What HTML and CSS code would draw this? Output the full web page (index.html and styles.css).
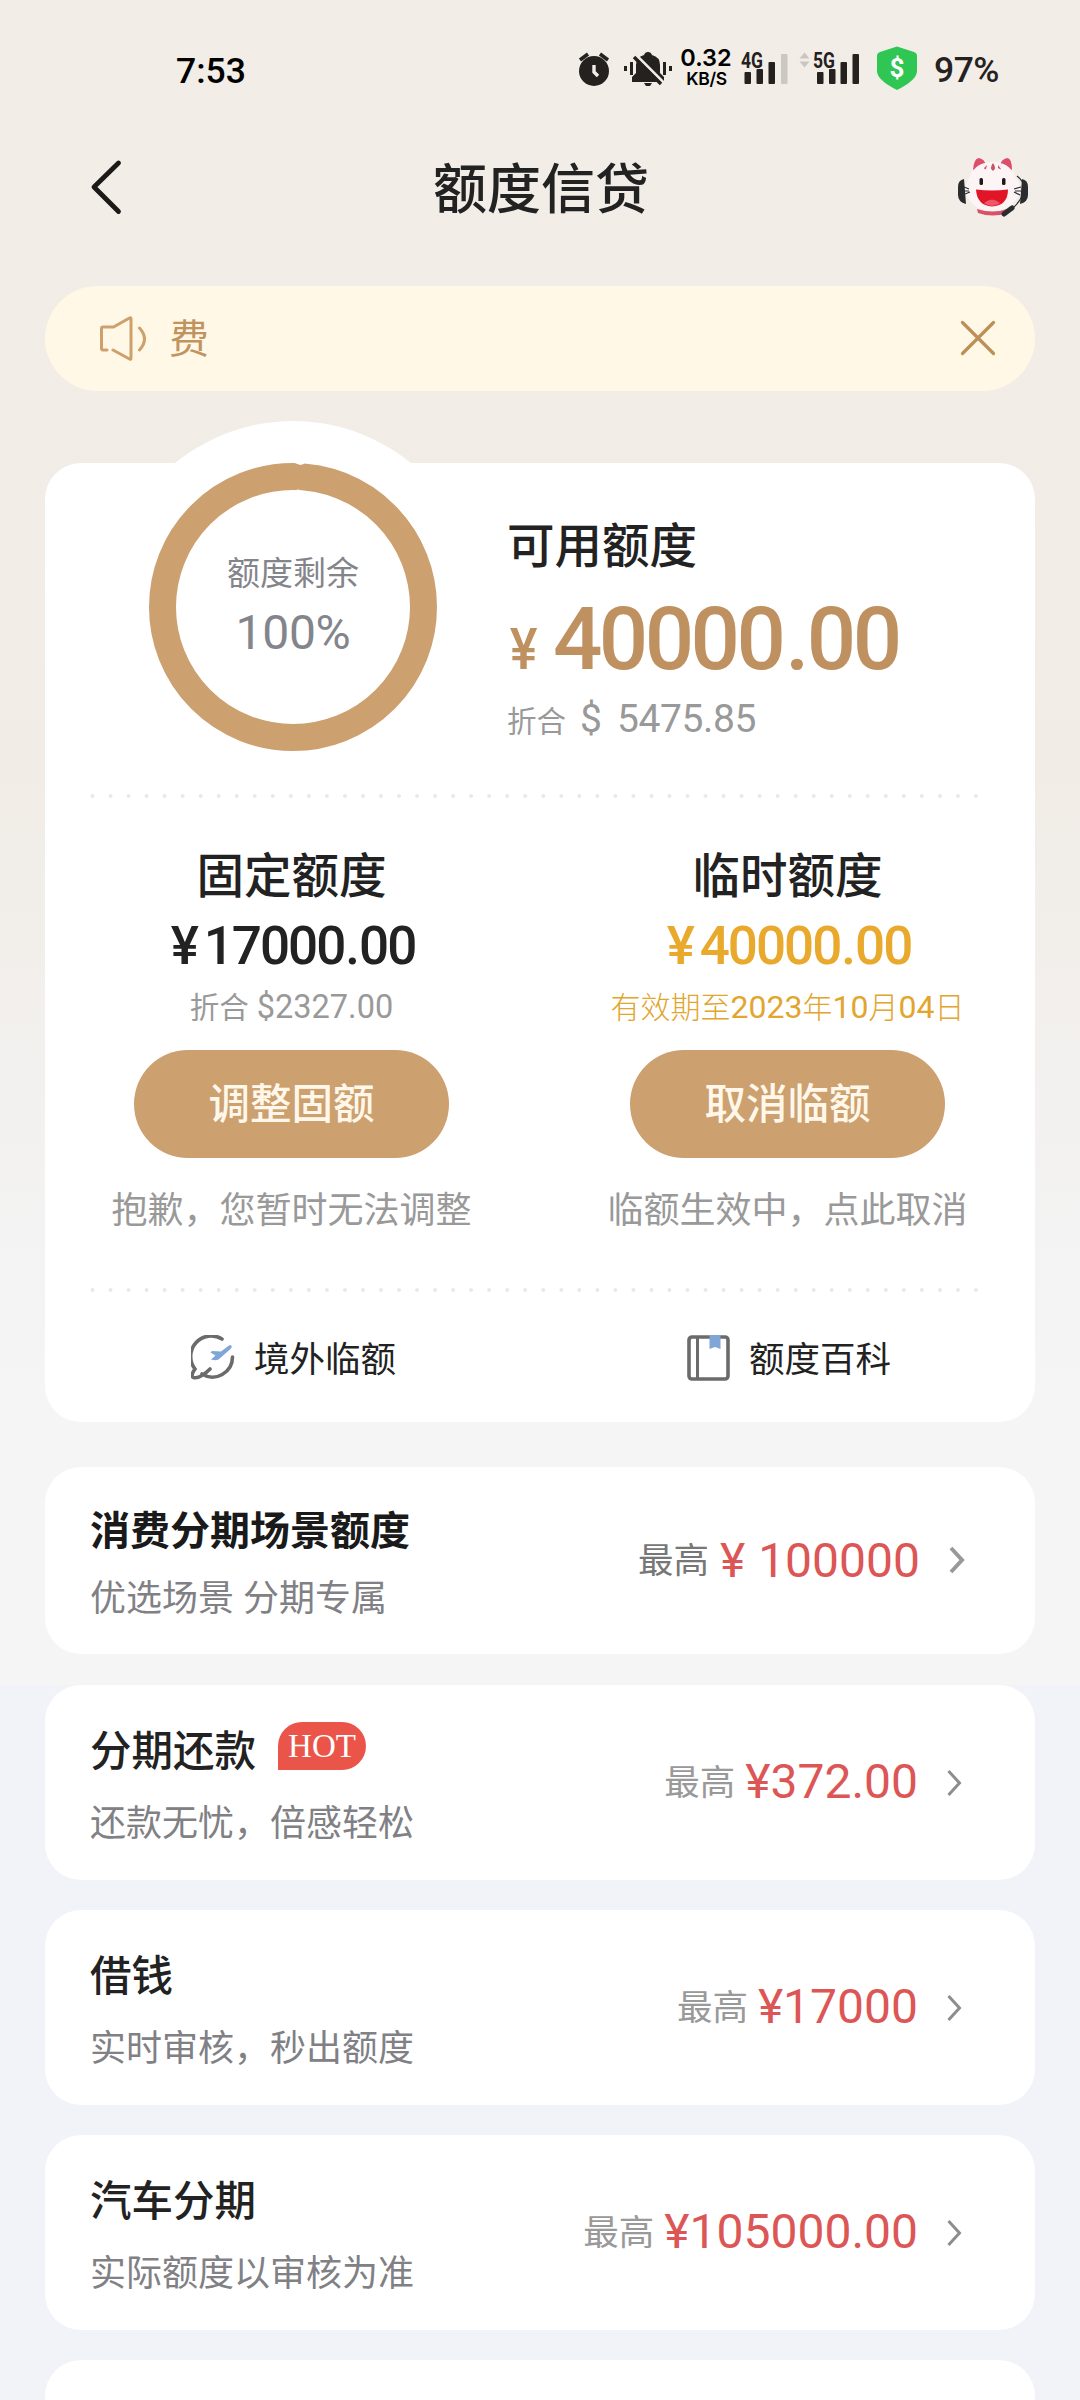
FILE: index.html
```html
<!DOCTYPE html>
<html lang="zh-CN">
<head>
<meta charset="utf-8">
<title>额度信贷</title>
<link rel="stylesheet" href="styles.css">
</head>
<body>
<div class="screen">
  <div class="status">
    <span class="clock">7:53</span>
    <svg class="status-icons" width="98" height="50" viewBox="576 42 98 50">
      <g fill="#25211f">
        <circle cx="594" cy="71" r="15"/>
        <path d="M580 60l8-6M608 60l-8-6" stroke="#25211f" stroke-width="3.6"/>
        <path d="M594 65v7l4 4" fill="none" stroke="#f1ede7" stroke-width="3.4"/>
        <path d="M632 82v-5l4-4v-8q0-8 8-10q1-3 4-3t4 3q8 2 8 10v8l4 4v5z"/>
        <path d="M644 83h8l-2 3h-4z"/>
        <path d="M624 66h3v5h-3zM630 62h3v13h-3zM663 62h3v13h-3zM669 66h3v5h-3z"/>
      </g>
      <path d="M637 56l27 27" stroke="#f1ede7" stroke-width="3"/>
      <path d="M634 57l27 27" stroke="#25211f" stroke-width="3.4"/>
    </svg>
    <div class="speed"><span class="speed-num">0.32</span><span class="speed-unit">KB/S</span></div>
    <svg class="signal" width="180" height="50" viewBox="738 42 180 50">
      <g fill="#25211f" font-family="Roboto, sans-serif" font-size="22" font-weight="700">
        <text x="741" y="67.500" textLength="22" lengthAdjust="spacingAndGlyphs">4G</text>
        <text x="813" y="67.500" textLength="22" lengthAdjust="spacingAndGlyphs">5G</text>
        <rect x="744.500" y="72" width="6.500" height="12" rx="1"/>
        <rect x="756.500" y="69" width="6.500" height="15" rx="1"/>
        <rect x="768.500" y="62" width="6.500" height="22" rx="1"/>
        <rect x="781" y="54" width="6.500" height="30" rx="1" fill="#cbc7c2"/>
        <rect x="817" y="72" width="6.500" height="12" rx="1"/>
        <rect x="829" y="69" width="6.500" height="15" rx="1"/>
        <rect x="840.500" y="62" width="6.500" height="22" rx="1"/>
        <rect x="852.500" y="54" width="6.500" height="30" rx="1"/>
      </g>
      <path d="M799.500 58.500l5-6 5 6zM799.500 61.500l5 6 5-6z" fill="#c9c5c0"/>
      <path d="M897 46.500l17 5.500q3 1 3 4v15q0 9-20 19q-20-10-20-19V56q0-3 3-4z" fill="#2fc653"/>
      <text x="897" y="77" text-anchor="middle" font-family="Roboto, sans-serif" font-size="26" font-weight="700" fill="#fff">$</text>
    </svg>
    <span class="battery">97%</span>
  </div>

  <header class="nav">
    <svg class="back" width="34" height="60" viewBox="0 0 34 60"><path d="M28.500 6L4 30l24.500 24.500" fill="none" stroke="#1c1a19" stroke-width="4.800" stroke-linecap="round" stroke-linejoin="round"/></svg>
    <h1>额度信贷</h1>
    <svg class="mascot" width="70" height="64" viewBox="958 155 70 64">
      <path d="M964 179q-6 1-6 8v8q0 7 8 9zM1022 179q6 1 6 8v8q0 7-8 9z" fill="#2b2c2e"/>
      <path d="M970 180q1-23 8-22q8 0 13 8zM1015 180q-1-23-8-22q-8 0-12 8z" fill="#fbeeee"/>
      <path d="M973 170q1-12 6-12q6 1 7 8zM1012 170q0-12-5-12q-6 1-7 8z" fill="#dd4f68"/>
      <path d="M977 209q16 5 30 0v4q-14 5-29 0z" fill="#d8506a"/>
      <path d="M992.500 162q17 0 22 14q10 12 1 24q-7 11-23 11t-23-11q-9-12 1-24q5-14 22-14z" fill="#fdf5f5"/>
      <path d="M993 163q4 5 0 8q-4-3 0-8zM987 165l-1 4q-1 1-2-1zM998 165l3 4q0 1-3-1z" fill="#c95566"/>
      <rect x="979.500" y="178" width="3.500" height="7" rx="1.500" fill="#20191b"/>
      <rect x="1002" y="178" width="3.500" height="7" rx="1.500" fill="#20191b"/>
      <path d="M976 189.500q16 2 32 0q0 16-16 17q-15-1-16-17z" fill="#e01526"/>
      <path d="M984 203q8-7 16 0q-8 6-16 0z" fill="#f0556b"/>
      <path d="M964 187l5 2M964 191h5M965 194l5-2M1021 187l-7 2M1021 191h-6M1020 195l-6-3M1017 176q7 5 7 13q-1 10-12 20" stroke="#2b2c2e" stroke-width="1.200" fill="none"/>
      <path d="M1004 214l8-6" stroke="#2b2c2e" stroke-width="5" stroke-linecap="round"/>
    </svg>
  </header>

  <section class="notice">
    <svg width="48" height="48" viewBox="99 315 48 48" fill="none" stroke="#cda06c" stroke-width="3" stroke-linecap="round" stroke-linejoin="round">
      <path d="M107 350h-4q-1.500 0-1.500-1.500V328.500q0-1.500 1.500-1.500h10.500l16-9q1.500-1 1.500 1v39q0 2-1.500 1L113 350M139.500 328q10 11 0 22"/>
    </svg>
    <span class="notice-text">费</span>
    <svg class="close" width="38" height="38" viewBox="0 0 38 38"><path d="M3.500 2.500l31 31m0-31l-31 31" stroke="#bd9058" stroke-width="3.300" stroke-linecap="round"/></svg>
  </section>

  <section class="card quota">
    <div class="hero">
      <div class="ring">
        <svg width="288" height="288" viewBox="0 0 288 288">
          <circle cx="144" cy="144" r="130.500" fill="none" stroke="#cca06f" stroke-width="27"/>
          <path d="M146 0l5 2 4-1V0zM145 27.500l4-1 6 1.500z" fill="#fff"/>
        </svg>
        <div class="ring-label"><span class="ring-name">额度剩余</span><span class="ring-num">100%</span></div>
      </div>
      <div class="available">
        <div class="avail-title">可用额度</div>
        <div class="avail-amount"><span class="yen">¥</span>40000<span class="point">.</span>00</div>
        <div class="avail-usd"><span class="conv">折合</span><span class="dollar">$</span>5475.85</div>
      </div>
    </div>
    <svg class="dots" width="890" height="6"><path d="M2.500 3H888" stroke="#e9e9ed" stroke-width="4" stroke-linecap="round" stroke-dasharray="0 18.030"/></svg>
    <div class="split">
      <div class="half">
        <div class="half-title">固定额度</div>
        <div class="half-amount fixed"><span class="sign">¥</span>17000<span class="point">.</span>00</div>
        <div class="half-note"><span>折合</span>$2327.00</div>
        <div class="btn">调整固额</div>
        <div class="half-hint">抱歉，您暂时无法调整</div>
      </div>
      <div class="half">
        <div class="half-title">临时额度</div>
        <div class="half-amount temp"><span class="sign">¥</span>40000<span class="point">.</span>00</div>
        <div class="half-note date">有效期至<b>2023</b>年<b>10</b>月<b>04</b>日</div>
        <div class="btn">取消临额</div>
        <div class="half-hint">临额生效中，点此取消</div>
      </div>
    </div>
    <svg class="dots" width="890" height="6"><path d="M2.500 3H888" stroke="#e9e9ed" stroke-width="4" stroke-linecap="round" stroke-dasharray="0 18.030"/></svg>
    <div class="links">
      <div class="link">
        <svg width="44" height="48" viewBox="0 0 44 48" fill="none" stroke="#6b6b6b" stroke-width="3.600" stroke-linecap="round">
          <path d="M31 4A20.500 20.500 0 0 0 4 34Q-1 41 2.500 42.500Q9 44 19 34M11 39A20 20 0 0 0 41.500 22"/>
          <path d="M39.500 10q2.500 1.500 0 4l-12 10.500q-3 1.500-7.500 0l4.500-4-5-3 1.500-1.500 9 .5 8-6z" fill="#7fa6d6" stroke="none"/>
        </svg>
        <span>境外临额</span>
      </div>
      <div class="link">
        <svg width="44" height="48" viewBox="0 0 44 48" fill="none" stroke="#6b6b6b" stroke-width="3.600">
          <rect x="3" y="2" width="39" height="42" rx="3"/><path d="M11.500 2v42" stroke-width="3"/>
          <path d="M23.500 0h11v14l-5.500-2-5.500 2z" fill="#7fa6d6" stroke="none"/>
        </svg>
        <span>额度百科</span>
      </div>
    </div>
  </section>

  <section class="card item scene">
    <div class="item-text"><div class="item-title">消费分期场景额度</div><div class="item-sub">优选场景 分期专属</div></div>
    <span class="max">最高</span><span class="price"><span class="wide-yen">¥</span>100000</span>
    <svg class="arrow" width="18" height="32" viewBox="0 0 18 32"><path d="M3 3l11 12L3 27" fill="none" stroke="#999" stroke-width="4"/></svg>
  </section>
  <section class="card item">
    <div class="item-text"><div class="item-title">分期还款<span class="hot">HOT</span></div><div class="item-sub">还款无忧，倍感轻松</div></div>
    <span class="max">最高</span><span class="price">¥372.00</span>
    <svg class="arrow" width="18" height="32" viewBox="0 0 18 32"><path d="M2.500 4l11 12-11 12" fill="none" stroke="#8d8d8d" stroke-width="3"/></svg>
  </section>
  <section class="card item">
    <div class="item-text"><div class="item-title">借钱</div><div class="item-sub">实时审核，秒出额度</div></div>
    <span class="max">最高</span><span class="price">¥17000</span>
    <svg class="arrow" width="18" height="32" viewBox="0 0 18 32"><path d="M2.500 4l11 12-11 12" fill="none" stroke="#8d8d8d" stroke-width="3"/></svg>
  </section>
  <section class="card item">
    <div class="item-text"><div class="item-title">汽车分期</div><div class="item-sub">实际额度以审核为准</div></div>
    <span class="max">最高</span><span class="price">¥105000.00</span>
    <svg class="arrow" width="18" height="32" viewBox="0 0 18 32"><path d="M2.500 4l11 12-11 12" fill="none" stroke="#8d8d8d" stroke-width="3"/></svg>
  </section>
  <section class="card item"></section>
</div>
</body>
</html>
```
FILE: styles.css
```css
* { box-sizing: border-box; }
body { margin: 0; }
svg { display: block; flex: none; }
.screen {
  width: 1080px;
  height: 2400px;
  overflow: hidden;
  background: linear-gradient(#f2ede7 0, #f1ece6 780px, #f3f3f3 1240px, #f5f5f5 1400px, #f5f5f5 1685px, #f2f3f9 1685px);
  font-family: Roboto, "Noto Sans CJK SC", sans-serif;
  color: #222;
  white-space: nowrap;
}

.status { display: flex; align-items: center; height: 92px; padding: 42px 0 0 176px; }
.clock { width: 400px; font-size: 35.500px; font-weight: 500; line-height: 50px; color: #000; padding-top: 7px; }
.battery { margin-left: 16px; font-size: 35.500px; line-height: 50px; padding-top: 6px; font-weight: 500; color: #25211f; letter-spacing: -.5px; }
.speed { width: 64px; display: flex; flex-direction: column; align-items: center; color: #000; font-family: Inter, sans-serif; font-weight: 600; }
.speed-num { font-size: 23.500px; line-height: 20px; padding-bottom: 1px; }
.speed-unit { font-size: 17.500px; line-height: 17px; padding: 1px 0 0 1px; letter-spacing: -.4px; }

.nav { display: flex; align-items: center; justify-content: space-between; height: 194px; padding: 0 52px 4px 90px; }
.nav h1 { margin: 7px 22px 0 22px; font-size: 54px; line-height: 60px; font-weight: 500; }

.notice { display: flex; align-items: center; height: 105px; margin: 0 45px 72px; padding: 0 38px 0 54px; border-radius: 53px; background: #fff8e6; }
.notice-text { margin-left: 22px; padding-top: 3px; flex: 1; font-size: 40px; line-height: 60px; color: #c1935f; }

.card { margin: 0 45px 30px; background: #fff; border-radius: 36px; }
.quota { height: 959px; margin-bottom: 45px; padding: 0 45px; }
.hero { display: flex; height: 330px; padding-left: 59px; }
.ring { position: relative; width: 288px; height: 288px; }
.ring::before { content: ""; position: absolute; inset: -42px; border-radius: 50%; background: #fff; }
.ring svg { position: relative; }
.ring-label { position: absolute; inset: 86px 0 0; display: flex; flex-direction: column; align-items: center; color: #84848b; }
.ring-name { font-size: 33px; line-height: 50px; }
.ring-num { font-size: 48px; line-height: 68px; letter-spacing: -.3px; }
.available { padding: 54px 0 0 70px; }
.avail-title { font-size: 47.500px; line-height: 60px; font-weight: 500; }
.avail-amount { display: flex; align-items: baseline; height: 117px; line-height: 124px; font-size: 87px; font-weight: 500; letter-spacing: -3.600px; color: #bf9160; }
.yen { width: 46px; padding-left: 3px; font-size: 58px; letter-spacing: 0; transform: scaleX(.9); transform-origin: left; }
.point { padding: 0 1px 0 3px; }
.avail-usd { display: flex; align-items: baseline; height: 50px; line-height: 50px; font-size: 39px; letter-spacing: -.4px; color: #999; }
.conv { font-size: 29.500px; letter-spacing: 0; width: 73px; }
.dollar { width: 37px; }

.split { display: flex; justify-content: space-between; height: 488px; padding: 48px 45px 0 44px; }
.half { display: flex; flex-direction: column; align-items: center; width: 315px; }
.half-title { font-size: 47.500px; line-height: 60px; font-weight: 500; }
.half-amount { display: flex; align-items: center; padding-left: 3px; font-size: 53px; font-weight: 500; line-height: 78px; letter-spacing: -2px; }
.half-amount .sign { width: 33px; }
.half-amount .point { padding: 0 1px; }
.half-amount.temp { color: #e9a92c; }
.half-note { display: flex; align-items: baseline; height: 46px; line-height: 44px; font-size: 32.500px; color: #999; }
.half-note span { font-size: 29.500px; margin-right: 8px; }
.half-note.date { font-size: 30px; font-weight: 300; color: #e2a52e; }
.half-note b { font-size: 32px; font-weight: 400; }
.btn { width: 315px; height: 108px; margin-top: 19px; border-radius: 54px; background: #cca06f; color: #fff8ea; font-size: 41.500px; font-weight: 500; line-height: 110px; text-align: center; }
.half-hint { margin-top: 30px; font-size: 36px; line-height: 46px; color: #999; }

.links { display: flex; }
.link { flex: none; display: flex; align-items: center; width: 495px; padding: 40px 0 0 101px; }
.link span { margin-left: 19px; font-size: 35.500px; line-height: 50px; padding-top: 2px; }

.item { display: flex; align-items: center; height: 195px; padding: 0 71px 0 45px; }
.item-text { flex: 1; padding-top: 10px; }
.item-title { display: flex; align-items: center; font-size: 41.500px; font-weight: 500; line-height: 60px; }
.item-sub { margin-top: 12px; font-size: 36px; line-height: 60px; color: #808085; }
.max { font-size: 35.500px; line-height: 58px; color: #999; margin-right: 10px; }
.price { font-size: 48px; line-height: 58px; padding-bottom: 1px; color: #dc5656; }
.arrow { margin-left: 28px; }
.scene { height: 187px; margin-bottom: 31px; padding-right: 69px; }
.scene .item-title { font-size: 40px; font-weight: 700; color: #1a1a1a; }
.scene .item-sub { margin-top: 7px; }
.scene .max { color: #777; margin-right: 11px; }
.scene .price { padding-bottom: 0; }
.wide-yen { margin-right: 13px; }
.hot { margin: -12px 0 0 22px; width: 88px; height: 48px; border-radius: 24px 24px 24px 0; background: #eb5549; color: #fff; font: 33px/48px "Liberation Serif", serif; text-align: center; }
```
